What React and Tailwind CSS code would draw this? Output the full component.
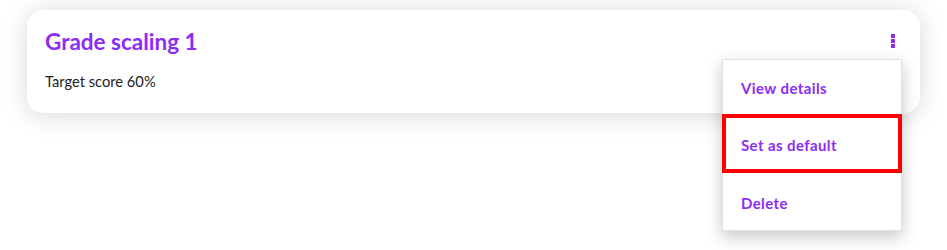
import React from "react";

const menuItems = ["View details", "Set as default", "Delete"];

function DotsIcon() {
  return (
    <svg width="6" height="16" viewBox="0 0 6 16" className="block">
      <rect x="1" y="1" width="4" height="4" fill="#8c2cf5" />
      <rect x="1" y="6" width="4" height="4" fill="#8c2cf5" />
      <rect x="1" y="11" width="4" height="4" fill="#8c2cf5" />
    </svg>
  );
}

function GradeCard() {
  return (
    <div className="relative bg-white rounded-2xl shadow-[0_2px_26px_rgba(0,0,0,0.16)] px-[18px] pt-[19px] pb-[22px]">
      <div className="flex items-start justify-between">
        <h2 className="text-[22.5px] leading-[26px] font-bold text-[#8c2cf5]">
          Grade scaling 1
        </h2>
        <button className="mr-[6px] mt-[4px]">
          <DotsIcon />
        </button>
      </div>
      <p className="mt-[16px] text-[14.7px] leading-[20px] text-[#222]">
        Target score 60%
      </p>

      <div className="absolute left-[695px] top-[49px] w-[180px] bg-white border border-[#e3e3e3] shadow-[0_6px_16px_rgba(0,0,0,0.22)]">
        {menuItems.map((item, i) => (
          <div
            key={item}
            className={
              i === 0
                ? "h-[54px] pl-[18px] pt-[3px] flex items-center text-[15px] tracking-[0.4px] font-bold text-[#8c2cf5]"
                : i === 1
                ? "-mx-px h-[59px] border-4 border-[#ff0000] pl-[15px] pt-[3px] flex items-center text-[15px] tracking-[0.4px] font-bold text-[#8c2cf5]"
                : "h-[57px] pl-[18px] pt-[3px] flex items-center text-[15px] tracking-[0.4px] font-bold text-[#8c2cf5]"
            }
          >
            {item}
          </div>
        ))}
      </div>
    </div>
  );
}

export default function App() {
  return (
    <div
      className="w-[947px] h-[250px] bg-white px-[27px] pt-[10px] overflow-hidden"
      style={{ fontFamily: "Lato, 'Noto Sans', sans-serif" }}
    >
      <GradeCard />
    </div>
  );
}
